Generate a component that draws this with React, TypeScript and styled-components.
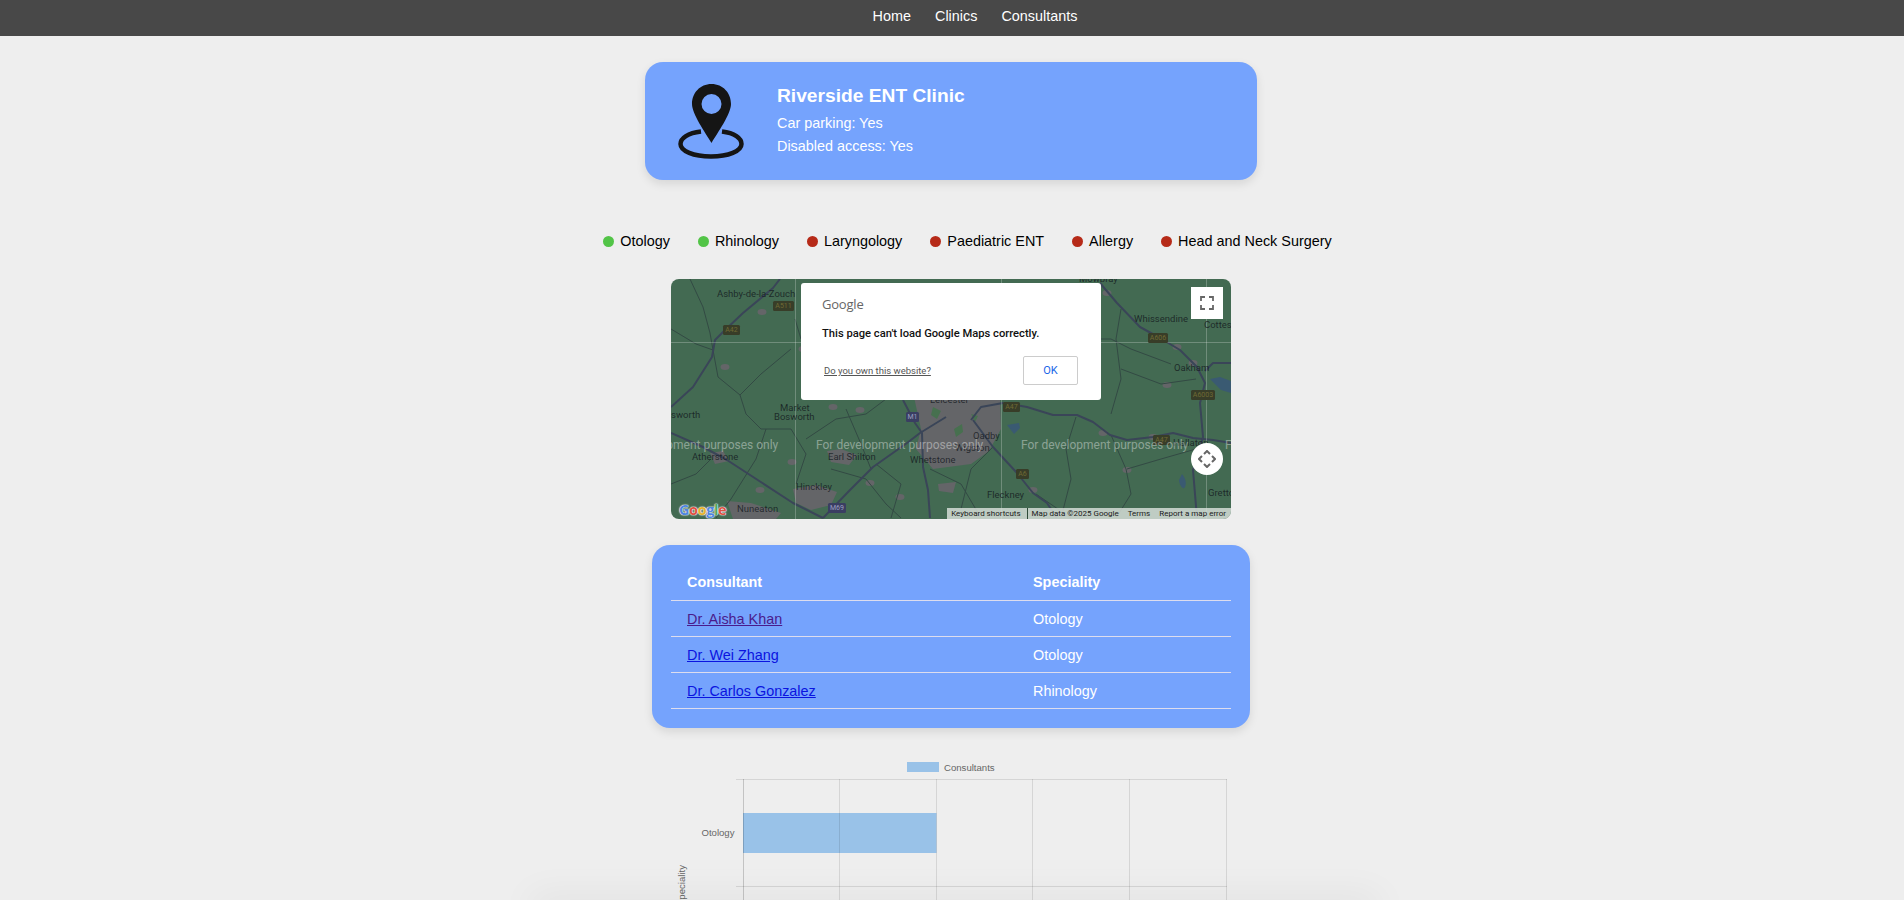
import React from "react";
import styled, { createGlobalStyle } from "styled-components";

const Global = createGlobalStyle`
  html, body { margin: 0; padding: 0; height: 900px; overflow: hidden; background: #eeeeee; }
  body { font-family: "Liberation Sans", Arial, sans-serif; }
`;
const Page = styled.div`display:flex;flex-direction:column;height:900px;overflow:hidden;position:relative;`;
const Nav = styled.nav`flex:none;height:36px;background:#484848;display:flex;justify-content:center;align-items:center;gap:24px;padding:0 0 5px 46px;box-sizing:border-box;`;
const NavLink = styled.a`color:#fff;font-size:14.4px;`;
const Main = styled.main`display:flex;flex-direction:column;align-items:center;padding-right:2px;`;
const Card = styled.section`margin-top:26px;width:612px;height:118px;box-sizing:border-box;background:#75a3fd;border-radius:18px;box-shadow:0 4px 10px rgba(0,0,0,.1);display:flex;align-items:center;padding-left:33px;color:#fff;`;
const Info = styled.div`margin-left:33px;display:flex;flex-direction:column;`;
const Title = styled.h2`margin:0 0 4px;font-size:19.2px;line-height:24px;`;
const InfoLine = styled.div`font-size:14.4px;line-height:23px;`;
const Legend = styled.ul`list-style:none;margin:51px 0 0;padding:0 0 0 33px;display:flex;gap:28px;height:20px;align-items:center;`;
const LegendItem = styled.li`display:flex;align-items:center;gap:6px;font-size:14.4px;color:#000;`;
const Dot = styled.span<{ $on: boolean }>`width:11px;height:11px;border-radius:50%;background:${p => (p.$on ? "#52c447" : "#b62a18")};`;
const MapBox = styled.div`margin-top:28px;width:560px;height:240px;position:relative;border-radius:8px;overflow:hidden;background:#436a52;flex:none;`;
const MapTiles = styled.div`position:absolute;inset:0;filter:blur(.45px);`;
const Dialog = styled.div`position:absolute;left:130px;top:4px;width:300px;height:117px;background:#fff;border-radius:3px;box-sizing:border-box;font-family:Roboto,sans-serif;padding:12px 23px 15px 21px;display:flex;flex-direction:column;`;
const Logo = styled.div`font-family:"Open Sans",sans-serif;font-size:13px;line-height:18px;color:#666;letter-spacing:-.2px;`;
const DialogText = styled.div`margin-top:14px;font-size:11.2px;line-height:13px;font-weight:500;color:#111;`;
const DialogActions = styled.div`margin-top:auto;display:flex;justify-content:space-between;align-items:center;padding-left:2px;`;
const OwnLink = styled.a`font-size:9.5px;color:#555;text-decoration:underline;`;
const Ok = styled.button`width:55px;height:29px;box-sizing:border-box;background:#fff;border:1px solid #ccc;border-radius:2px;font-family:Roboto,sans-serif;font-size:11px;color:#1a66e8;padding:0;`;
const MapBtn = styled.div<{ $round?: boolean; $top: number }>`position:absolute;right:8px;top:${p => p.$top}px;width:32px;height:32px;background:#fff;border-radius:${p => (p.$round ? "50%" : "0")};display:flex;align-items:center;justify-content:center;`;
const Attribution = styled.div`position:absolute;right:0;bottom:0;height:11px;background:rgba(218,226,220,.82);display:flex;align-items:center;font-family:Roboto,sans-serif;font-size:8px;color:#1a1a1a;padding:0 5px 0 4px;white-space:nowrap;`;
const AttrKeys = styled.span`padding-right:6px;border-right:1px solid #2e4a38;margin-right:4px;line-height:11px;`;
const AttrLink = styled.span`margin-left:9px;`;
const MapLabel = styled.span<{ $x: number; $y: number }>`position:absolute;left:${p => p.$x}px;top:${p => p.$y - 6}px;line-height:12px;font-family:Roboto,sans-serif;white-space:nowrap;font-size:9.5px;color:rgba(18,22,28,.78);`;
const DevMark = styled.span<{ $x: number }>`position:absolute;left:${p => p.$x}px;top:159px;line-height:14px;font-family:Roboto,sans-serif;white-space:nowrap;font-size:12px;color:rgba(255,255,255,.4);`;
const Shield = styled.span<{ $x: number; $y: number; $w: number; $m?: boolean }>`position:absolute;left:${p => p.$x}px;top:${p => p.$y}px;width:${p => p.$w}px;height:10px;line-height:10px;text-align:center;border-radius:1.5px;font-family:Roboto,sans-serif;font-size:7px;background:${p => (p.$m ? "#3a3e62" : "#383d28")};color:${p => (p.$m ? "#9a9fc0" : "#6f6a34")};`;
const GMark = styled.span`position:absolute;left:8px;bottom:1px;font-family:"Open Sans",sans-serif;font-weight:700;font-size:14.5px;line-height:17px;letter-spacing:-.4px;text-shadow:0 0 1px #fff,0 0 1px #fff,0 0 2px #fff;`;
const GLetter = styled.span<{ $c: string }>`color:${p => p.$c};`;
const TableCard = styled.section`margin-top:26px;width:598px;box-sizing:border-box;padding:19px;background:#75a3fd;border-radius:18px;box-shadow:0 4px 10px rgba(0,0,0,.1);flex:none;`;
const Table = styled.table`width:100%;border-collapse:collapse;font-size:14.4px;color:#fff;table-layout:fixed;`;
const Th = styled.th`text-align:left;padding:0 16px;height:36px;border-bottom:1px solid #dde;`;
const Td = styled.td`padding:0 16px;height:35px;border-bottom:1px solid #dde;`;
const ConsultantLink = styled.a<{ $visited?: boolean }>`color:${p => (p.$visited ? "#4a1b8c" : "#0a14e0")};`;
const Chart = styled.div`margin-top:27px;flex:none;width:560px;height:145px;`;
const Shade = styled.div`position:absolute;left:530px;right:524px;bottom:-30px;height:30px;box-shadow:0 -6px 36px rgba(0,0,0,.05);`;

const Pin = () => (
  <svg width="66" height="75" viewBox="0 0 66 75" style={{ flex: "none" }}>
    <path fillRule="evenodd" fill="#151515" d="M33.5 0C22 0 14 9 14 20c0 10 13 28 19.500 39C40 48 53 30 53 20 53 9 45 0 33.500 0zm0 10a10 10 0 1 1 0 20 10 10 0 0 1 0-20z"/>
    <path fill="none" stroke="#151515" strokeWidth="4.5" d="M23 47.500C10 49 2.500 54 2.500 60c0 7 13 12.500 30.500 12.500S63.500 67 63.500 60c0-6-7-11-19.500-12.500"/>
  </svg>
);

const smooth = (pts: number[][]) => "M" + pts.map(p => p.join(" ")).join("L");
const thick = [
  [[0,128],[22,108],[41,78],[44,61],[52,53],[72,34],[102,9],[109,0]],
  [[0,154],[32,168],[56,181],[122,224],[152,239]],
  [[152,239],[179,211],[202,188],[236,164],[249,154],[262,146],[275,138]],
  [[232,121],[244,144],[251,154],[252,188],[257,211],[259,239]],
  [[332,124],[356,128],[382,136],[406,136],[422,143],[439,156],[456,161],[482,158],[502,154],[522,159],[542,161],[560,164]],
  [[302,141],[322,168],[346,194],[362,214],[376,224],[386,239]],
  [[429,4],[446,24],[469,48],[489,59],[509,71],[526,88],[534,104],[529,124],[532,158],[522,191],[526,239]],
  [[300,141],[310,128],[332,124]],
  [[534,92],[542,84],[560,84]],
];
const thin = [
  [[19,0],[32,28],[39,54],[42,71],[47,98],[69,116],[75,135],[90,150],[120,150]],
  [[0,50],[25,65],[42,71]],
  [[69,116],[90,95],[120,70]],
  [[95,150],[85,180],[60,220],[45,239]],
  [[120,150],[135,175],[125,205]],
  [[135,160],[165,140],[195,135],[215,120]],
  [[175,130],[190,165],[200,190]],
  [[0,205],[25,195],[40,180]],
  [[160,190],[195,200],[215,225],[230,239]],
  [[205,185],[230,205],[220,239]],
  [[259,190],[290,205],[310,239]],
  [[322,168],[300,190],[290,230]],
  [[405,138],[395,170],[400,200],[390,239]],
  [[440,156],[455,190],[460,215],[445,239]],
  [[456,190],[490,180],[525,170]],
  [[400,60],[440,60],[460,70],[500,85]],
  [[450,30],[445,60],[450,100],[440,135]],
  [[450,90],[490,105],[525,100]],
  [[330,75],[380,85],[410,60],[429,4]],
  [[340,110],[380,90]],
  [[365,215],[400,239]],
  [[195,100],[160,90],[130,60],[124,40]],
];
const towns: number[][][] = [
  [[243,118],[329,118],[330,150],[318,172],[300,185],[262,190],[245,170],[250,150]],
  [[122,210],[145,206],[166,213],[160,226],[140,231],[125,224]],
  [[56,222],[80,224],[110,234],[105,240],[62,240]],
  [[39,174],[52,172],[58,182],[44,185]],
  [[156,172],[170,170],[186,176],[178,186],[160,183]],
  [[267,205],[285,203],[282,214],[268,212]],
];
const blobs = [[91,33],[162,128],[189,131],[121,183],[89,211],[199,204],[229,218],[436,14],[506,68],[522,84],[496,106],[432,154],[362,211],[456,191],[482,158],[132,70],[54,88],[224,17]];
const RoadMap = () => (
  <svg width="560" height="240" viewBox="0 0 560 240" style={{ display: "block" }}>
    {towns.map((t, i) => <path key={i} d={smooth(t) + "Z"} fill="#646568" />)}
    {blobs.map(([x, y], i) => <ellipse key={i} cx={x} cy={y} rx={4.500} ry={3} fill="#646568" />)}
    <path d="M262 128l8 4-4 8-6-4zM300 135l7 2-3 6zM283 150l8-5 1 8-7 5z" fill="#47704f" />
    {thin.map((p, i) => <path key={i} d={smooth(p)} fill="none" stroke="#334a44" strokeWidth="1" strokeLinejoin="round" />)}
    {thick.map((p, i) => <path key={i} d={smooth(p)} fill="none" stroke="#3a4558" strokeWidth="2" strokeLinejoin="round" />)}
    <path d="M539 100l10-2 11 4v12l-10-3zM336 146l12-2 1 5-6 6zM511 195c3 3 5 9 3 13s-6-3-6-7z" fill="#3a5a72" />
    <path d="M124.500 0V240M330.500 0V240M535.500 0V240M0 63.500H560" stroke="rgba(255,255,255,.24)" strokeWidth="1" fill="none"/>
  </svg>
);

const labels: [string, number, number][] = [
  ["Ashby-de-la-Zouch", 46, 15], ["Market", 109, 129], ["Bosworth", 103, 138], ["sworth", 0, 136],
  ["Atherstone", 21, 178], ["Hinckley", 125, 208], ["Nuneaton", 66, 230], ["Earl Shilton", 157, 178],
  ["Whetstone", 239, 181], ["Wigston", 284, 169], ["Oadby", 302, 157], ["Leicester", 259, 121],
  ["Mowbray", 408, 0], ["Whissendine", 463, 40], ["Cottesmore", 533, 46], ["Oakham", 503, 89],
  ["Fleckney", 316, 216], ["Gretton", 537, 214], ["Hallaton", 502, 164],
];
const shields: [string, number, number, number, boolean?][] = [
  ["A511", 102, 22, 21], ["A42", 52, 46, 17], ["M1", 235, 133, 13, true], ["M69", 157, 224, 18, true],
  ["A47", 332, 123, 17], ["A6", 345, 190, 13], ["A606", 477, 54, 20], ["A6003", 520, 111, 24], ["A47", 482, 156, 17],
];
const googleLetters: [string, string][] = [["G", "#4f86e0"], ["o", "#de5244"], ["o", "#e6b32e"], ["g", "#4f86e0"], ["l", "#4fa860"], ["e", "#de5244"]];

const ChartDrawing = () => (
  <svg width="560" height="145" viewBox="0 0 560 145" style={{ display: "block" }} fontFamily="Liberation Sans, Arial, sans-serif" fontSize="9.6" fill="#666">
    <rect x="236" y="7" width="32" height="10" fill="#99c2e8"/>
    <text x="273" y="15.500">Consultants</text>
    <text x="63.500" y="81" textAnchor="end">Otology</text>
    <text x="13.500" y="110" textAnchor="end" transform="rotate(-90 13.500 110)">Speciality</text>
    <rect x="72" y="58" width="193.500" height="40" fill="#99c2e8"/>
    <g stroke="rgba(0,0,0,.1)" strokeWidth="1" fill="none">
      <path d="M168.500 24V145M265.500 24V145M361.500 24V145M458.500 24V145M555.500 24V145"/>
      <path d="M65 24.500H556M65 131.500H556"/>
    </g>
    <path d="M72.500 24V145" stroke="rgba(0,0,0,.18)" fill="none"/>
  </svg>
);

export default function App() {
  return (
    <Page>
      <Global />
      <Nav><NavLink>Home</NavLink><NavLink>Clinics</NavLink><NavLink>Consultants</NavLink></Nav>
      <Main>
        <Card>
          <Pin />
          <Info>
            <Title>Riverside ENT Clinic</Title>
            <InfoLine>Car parking: Yes</InfoLine>
            <InfoLine>Disabled access: Yes</InfoLine>
          </Info>
        </Card>
        <Legend>
          {([["Otology", true], ["Rhinology", true], ["Laryngology", false], ["Paediatric ENT", false], ["Allergy", false], ["Head and Neck Surgery", false]] as [string, boolean][]).map(([t, on]) => (
            <LegendItem key={t}><Dot $on={on} />{t}</LegendItem>
          ))}
        </Legend>
        <MapBox>
          <MapTiles><RoadMap /></MapTiles>
          {labels.map(([t, x, y]) => <MapLabel key={t} $x={x} $y={y}>{t}</MapLabel>)}
          {shields.map(([t, x, y, w, m], i) => <Shield key={i} $x={x} $y={y} $w={w} $m={m}>{t}</Shield>)}
          {[-60, 145, 350, 554].map(x => <DevMark key={x} $x={x}>For development purposes only</DevMark>)}
          <GMark>{googleLetters.map(([l, c], i) => <GLetter key={i} $c={c}>{l}</GLetter>)}</GMark>
          <Dialog>
            <Logo>Google</Logo>
            <DialogText>This page can't load Google Maps correctly.</DialogText>
            <DialogActions>
              <OwnLink>Do you own this website?</OwnLink>
              <Ok>OK</Ok>
            </DialogActions>
          </Dialog>
          <MapBtn $top={8}>
            <svg width="14" height="14" viewBox="0 0 14 14" fill="none" stroke="#666" strokeWidth="1.800"><path d="M1 5V1h4M9 1h4v4M13 9v4H9M5 13H1V9"/></svg>
          </MapBtn>
          <MapBtn $round $top={164}>
            <svg width="18" height="18" viewBox="0 0 18 18" fill="none" stroke="#666" strokeWidth="2"><path d="M6 4l3-3 3 3M6 14l3 3 3-3M4 6L1 9l3 3M14 6l3 3-3 3"/></svg>
          </MapBtn>
          <Attribution>
            <AttrKeys>Keyboard shortcuts</AttrKeys>
            <span>Map data ©2025 Google</span>
            <AttrLink>Terms</AttrLink>
            <AttrLink>Report a map error</AttrLink>
          </Attribution>
        </MapBox>
        <TableCard>
          <Table>
            <colgroup><col style={{ width: "346px" }} /><col /></colgroup>
            <thead><tr><Th>Consultant</Th><Th>Speciality</Th></tr></thead>
            <tbody>
              <tr><Td><ConsultantLink $visited href="#a">Dr. Aisha Khan</ConsultantLink></Td><Td>Otology</Td></tr>
              <tr><Td><ConsultantLink href="#b">Dr. Wei Zhang</ConsultantLink></Td><Td>Otology</Td></tr>
              <tr><Td><ConsultantLink href="#c">Dr. Carlos Gonzalez</ConsultantLink></Td><Td>Rhinology</Td></tr>
            </tbody>
          </Table>
        </TableCard>
        <Chart><ChartDrawing /></Chart>
      </Main>
      <Shade />
    </Page>
  );
}
